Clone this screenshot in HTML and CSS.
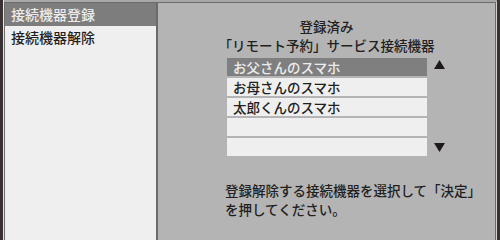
FILE: index.html
```html
<!DOCTYPE html>
<html lang="ja">
<head>
<meta charset="utf-8">
<title>接続機器解除</title>
<link rel="stylesheet" href="styles.css">
</head>
<body>
<div class="frame">
  <div class="gap"></div>
  <div class="panel">
    <nav class="menu">
      <div class="menu-item active">接続機器登録</div>
      <div class="menu-item">接続機器解除</div>
    </nav>
    <main class="main">
      <div class="title">
        <div>登録済み</div>
        <div>「リモート予約」サービス接続機器</div>
      </div>
      <div class="list-wrap">
        <ul class="list">
          <li class="row selected">お父さんのスマホ</li>
          <li class="row">お母さんのスマホ</li>
          <li class="row">太郎くんのスマホ</li>
          <li class="row"></li>
          <li class="row"></li>
        </ul>
        <div class="arrows">
          <svg class="arrow" width="11" height="9" viewBox="0 0 11 9"><polygon points="5.5,0 11,9 0,9" fill="#1e1a1a"/></svg>
          <svg class="arrow" width="11" height="9" viewBox="0 0 11 9"><polygon points="0,0 11,0 5.5,9" fill="#1e1a1a"/></svg>
        </div>
      </div>
      <p class="hint">登録解除する接続機器を選択して「決定」<br>を押してください。</p>
    </main>
  </div>
</div>
</body>
</html>
```

FILE: styles.css
```css
html, body {
  margin: 0;
  padding: 0;
  background: #b4b4b4;
}
body {
  width: 500px;
  min-height: 229px;
  height: 100vh;
  overflow: hidden;
  font-family: "Noto Sans CJK JP", "Noto Sans", sans-serif;
  font-size: 13.5px;
  font-weight: 500;
  color: #231f1f;
}
.frame {
  display: flex;
  height: 100%;
  min-height: 229px;
  box-sizing: border-box;
  border-left: 3px solid #3a3232;
  border-right: 3px solid #3a3232;
  background: #a8a8a8;
}
.gap {
  width: 1px;
  background: #e6e6e6;
}
.panel {
  flex: 1;
  display: flex;
  margin: 2px 1px 0 0;
  border: 1px solid #6c6c6c;
  border-bottom: none;
  box-shadow: 1px 0 0 #d0d0d0;
}
.menu {
  width: 151px;
  background: #efefef;
  border-right: 2px solid #6a6a6a;
}
.menu-item {
  height: 23px;
  line-height: 23px;
  padding-left: 6px;
  font-size: 14px;
}
.menu-item.active {
  background: #7d7d7d;
  color: #ececec;
}
.main {
  flex: 1;
  background: #b4b4b4;
  display: flex;
  flex-direction: column;
}
.title {
  text-align: center;
  line-height: 19px;
  padding-top: 14px;
}
.list-wrap {
  display: flex;
  margin-top: 3px;
  padding-left: 69px;
}
.list {
  list-style: none;
  margin: 0;
  padding: 0;
  width: 200px;
  display: flex;
  flex-direction: column;
  gap: 2px;
}
.row {
  height: 18px;
  line-height: 18px;
  background: #efefef;
  padding-left: 6px;
}
.row.selected {
  background: #7f7f7f;
  color: #ececec;
}
.arrows {
  display: flex;
  flex-direction: column;
  justify-content: space-between;
  margin-left: 7px;
  padding: 2px 0 4px;
}
.arrow {
  display: block;
}
.hint {
  margin: 25px 0 0;
  padding-left: 67px;
  line-height: 19px;
}
```
